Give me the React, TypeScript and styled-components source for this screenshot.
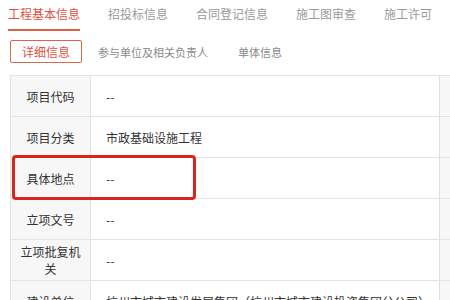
import React from 'react';
import styled, { createGlobalStyle } from 'styled-components';

const GlobalStyle = createGlobalStyle`
  html, body {
    margin: 0;
    padding: 0;
    background: #ffffff;
  }
  body {
    font-family: "Noto Sans CJK SC", "Noto Sans", sans-serif;
    color: #333;
  }
`;

const Page = styled.div`
  width: 450px;
  height: 300px;
  overflow: hidden;
  position: relative;
`;

const TabBar = styled.div`
  display: flex;
  align-items: flex-start;
  padding: 5px 0 0 8px;
  height: 27px;
  gap: 28px;
  white-space: nowrap;
`;

const Tab = styled.div<{ $active?: boolean }>`
  font-size: 12px;
  line-height: 18px;
  height: 24px;
  color: ${({ $active }) => ($active ? '#e0523f' : '#9a9a9a')};
  border-bottom: 2px solid ${({ $active }) => ($active ? '#e0603f' : 'transparent')};
`;

const SubBar = styled.div`
  display: flex;
  align-items: center;
  padding: 8px 0 0 10px;
  height: 23px;
  gap: 16px;
  white-space: nowrap;
`;

const SubButton = styled.div`
  width: 70px;
  height: 21px;
  border: 1px solid #d9664f;
  border-radius: 2px;
  color: #e0523f;
  font-size: 12px;
  display: flex;
  align-items: center;
  justify-content: center;
`;

const SubLink = styled.div`
  font-size: 11px;
  color: #8a8a8a;
  margin-right: 14px;
`;

const TableWrap = styled.div`
  position: relative;
  margin: 12px 0 0 10px;
  border-top: 1px solid #e4e4e4;
  border-left: 1px solid #e4e4e4;
`;

const Row = styled.div`
  display: grid;
  grid-template-columns: 80px 349px 20px;
  height: 40px;
  border-bottom: 1px solid #e4e4e4;
`;

const Label = styled.div`
  background: #f7f7f7;
  border-right: 1px solid #e4e4e4;
  font-size: 12px;
  line-height: 17px;
  color: #333;
  display: flex;
  align-items: center;
  justify-content: center;
  text-align: center;
  padding: 0 8px;
`;

const Value = styled.div`
  font-size: 12px;
  color: #333;
  display: flex;
  align-items: center;
  padding-left: 15px;
  border-right: 1px solid #e0e0e0;
  white-space: nowrap;
  overflow: hidden;
`;

const Extra = styled.div`
  background: #f7f7f7;
`;

const Highlight = styled.div`
  position: absolute;
  left: 1px;
  top: 79px;
  width: 178px;
  height: 39px;
  border: 3px solid #d8261f;
  border-radius: 4px;
`;

const rows = [
  { label: '项目代码', value: '--' },
  { label: '项目分类', value: '市政基础设施工程' },
  { label: '具体地点', value: '--' },
  { label: '立项文号', value: '--' },
  { label: '立项批复机关', value: '--' },
  { label: '建设单位', value: '杭州市城市建设发展集团（杭州市城市建设投资集团分公司）' },
];

const tabs = ['工程基本信息', '招投标信息', '合同登记信息', '施工图审查', '施工许可'];

export default function App() {
  return (
    <Page>
      <GlobalStyle />
      <TabBar>
        {tabs.map((t, i) => (
          <Tab key={t} $active={i === 0}>{t}</Tab>
        ))}
      </TabBar>
      <SubBar>
        <SubButton>详细信息</SubButton>
        <SubLink>参与单位及相关负责人</SubLink>
        <SubLink>单体信息</SubLink>
      </SubBar>
      <TableWrap>
        {rows.map(r => (
          <Row key={r.label}>
            <Label>{r.label}</Label>
            <Value>{r.value}</Value>
            <Extra />
          </Row>
        ))}
        <Highlight />
      </TableWrap>
    </Page>
  );
}
